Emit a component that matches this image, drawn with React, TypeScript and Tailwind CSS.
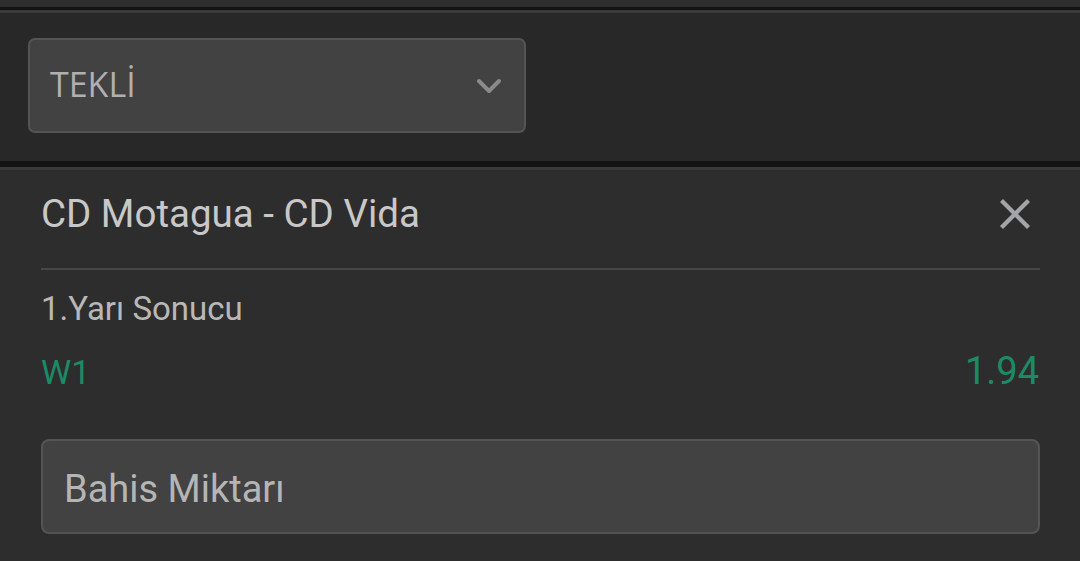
import { X } from 'lucide-react';

function Chevron() {
  return (
    <svg width="26" height="18" viewBox="0 0 26 18" fill="none">
      <path d="M3 4l10 10 10-10" stroke="#8a8a8a" strokeWidth="4" strokeLinecap="round" strokeLinejoin="round" />
    </svg>
  );
}

export default function App() {
  return (
    <div className="h-[561px] w-[1080px] overflow-hidden bg-[#2d2d2d] font-['Roboto',sans-serif]">
      <div className="h-[7px] bg-[#2e2e2e]" />
      <div className="h-[3px] bg-[#131313]" />
      <div className="h-[3px] bg-[#3a3a3a]" />

      <section className="bg-[#282828] pl-[28px] pt-[25px] pb-[28px]">
        <div className="flex h-[95px] w-[498px] items-center justify-between rounded-[7px] border-2 border-[#545454] bg-[#424242] pl-[20px] pr-[22px]">
          <span className="pb-[4px] font-['Open_Sans',sans-serif] text-[34px] leading-none text-[#b0b0b0]">TEKLİ</span>
          <Chevron />
        </div>
      </section>

      <div className="h-[6px] bg-[#131313]" />
      <div className="h-[3px] bg-[#3a3a3a]" />

      <div className="pl-[41px] pr-[40px] pt-[20px]">
        <div className="flex h-[48px] items-center justify-between">
          <span className="text-[38.5px] leading-[48px] text-[#c8c8c8]">CD Motagua - CD Vida</span>
          <X className="mr-[1px] h-[48px] w-[48px] text-[#a3a5a8]" strokeWidth={2.1} strokeLinecap="square" />
        </div>
        <div className="mt-[30px] h-[2px] bg-[#464646]" />

        <div className="mt-[19px] text-[33px] leading-[40px] text-[#b8b8b8]">1.Yarı Sonucu</div>

        <div className="mt-[18px] flex h-[48px] items-baseline justify-between leading-[48px] text-[#1d8a66]">
          <span className="text-[34px]">W1</span>
          <span className="pr-[1px] text-[38px]">1.94</span>
        </div>

        <div className="mt-[44px] flex h-[95px] items-center rounded-[8px] border-2 border-[#545454] bg-[#424242] pl-[21px] pr-[20px]">
          <span className="pt-[4px] text-[38px] leading-none text-[#b5b5b5]">Bahis Miktarı</span>
        </div>
      </div>
    </div>
  );
}
